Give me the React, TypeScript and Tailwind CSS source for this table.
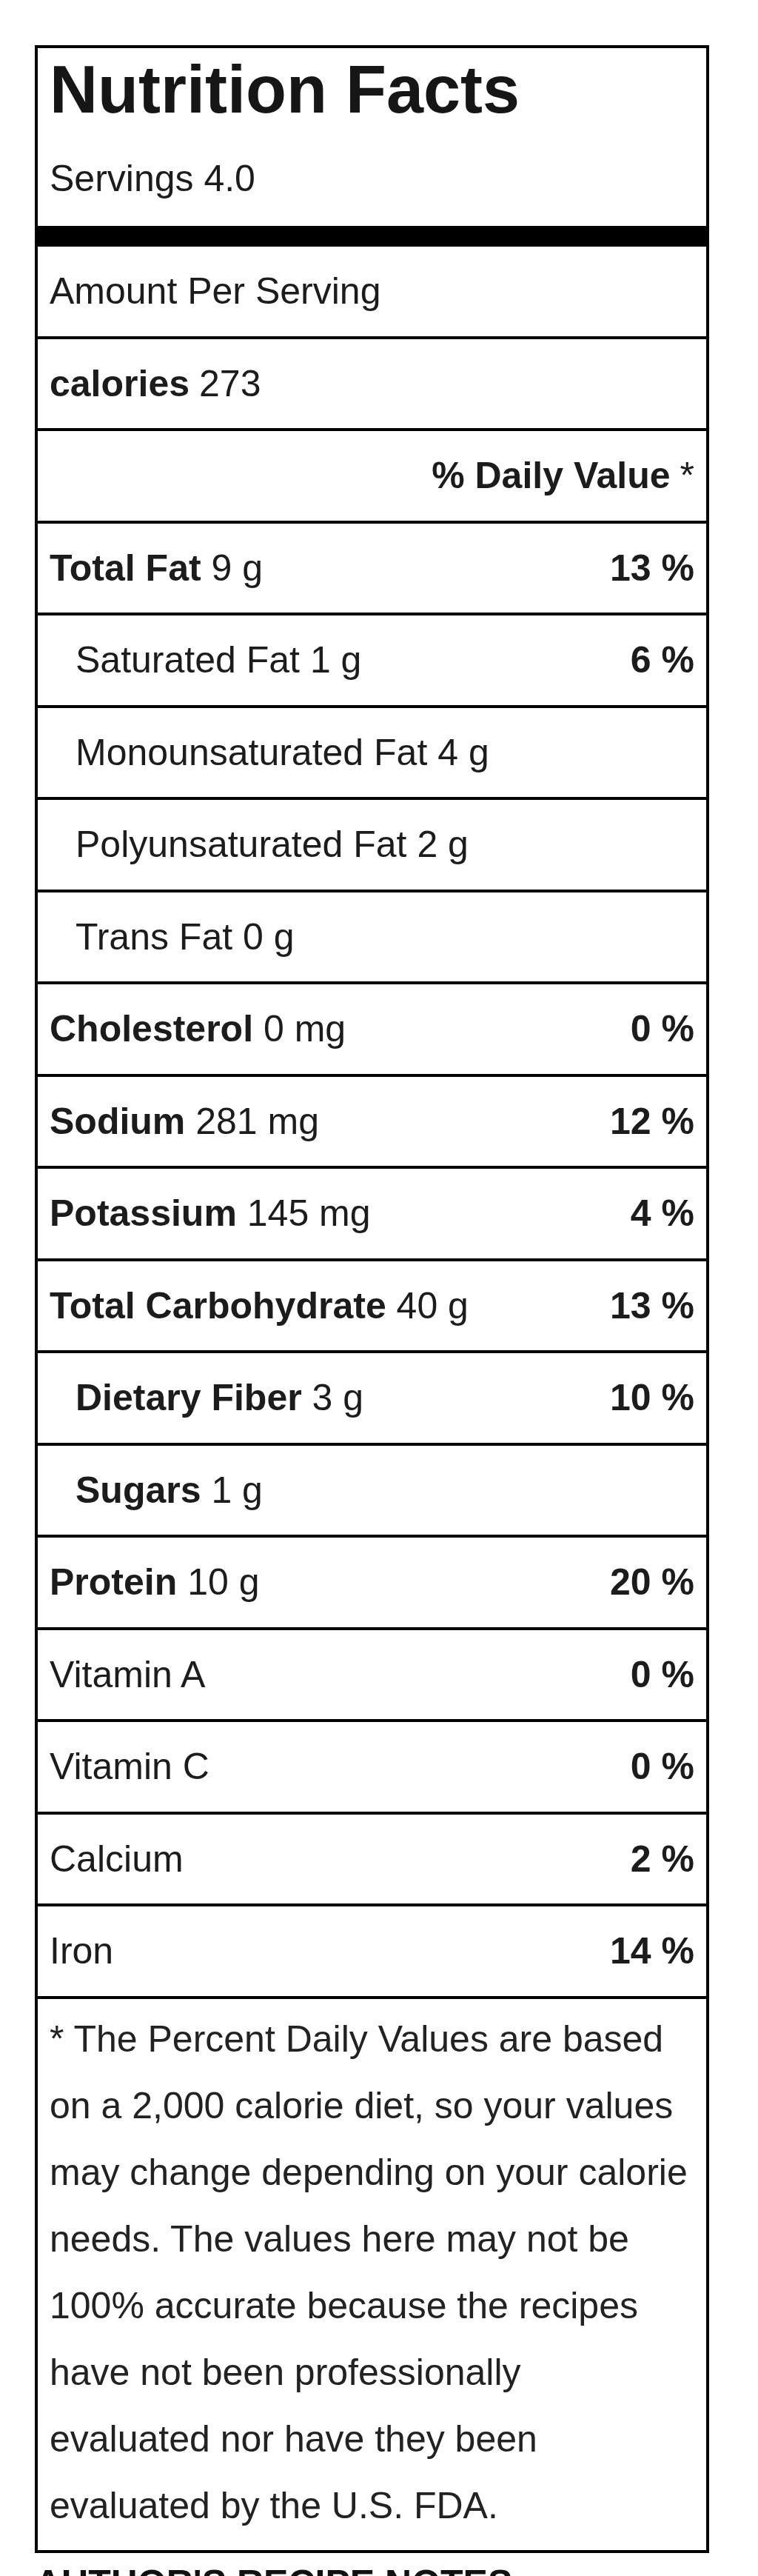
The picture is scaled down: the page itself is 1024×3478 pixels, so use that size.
import React from 'react';

interface Nutrient {
  label: string;
  amount?: string;
  percent?: string;
  bold?: boolean;
  indent?: boolean;
}

const nutrients: Nutrient[] = [
  { label: 'Total Fat', amount: '9 g', percent: '13 %', bold: true },
  { label: 'Saturated Fat', amount: '1 g', percent: '6 %', indent: true },
  { label: 'Monounsaturated Fat', amount: '4 g', indent: true },
  { label: 'Polyunsaturated Fat', amount: '2 g', indent: true },
  { label: 'Trans Fat', amount: '0 g', indent: true },
  { label: 'Cholesterol', amount: '0 mg', percent: '0 %', bold: true },
  { label: 'Sodium', amount: '281 mg', percent: '12 %', bold: true },
  { label: 'Potassium', amount: '145 mg', percent: '4 %', bold: true },
  { label: 'Total Carbohydrate', amount: '40 g', percent: '13 %', bold: true },
  { label: 'Dietary Fiber', amount: '3 g', percent: '10 %', bold: true, indent: true },
  { label: 'Sugars', amount: '1 g', bold: true, indent: true },
  { label: 'Protein', amount: '10 g', percent: '20 %', bold: true },
  { label: 'Vitamin A', percent: '0 %' },
  { label: 'Vitamin C', percent: '0 %' },
  { label: 'Calcium', percent: '2 %' },
  { label: 'Iron', percent: '14 %' },
];

const footnote = [
  '* The Percent Daily Values are based',
  'on a 2,000 calorie diet, so your values',
  'may change depending on your calorie',
  'needs. The values here may not be',
  '100% accurate because the recipes',
  'have not been professionally',
  'evaluated nor have they been',
  'evaluated by the U.S. FDA.',
];

const Row: React.FC<{ children: React.ReactNode; className?: string }> = ({ children, className = '' }) => (
  <div className={`flex h-[124.5px] items-center border-b-4 border-black px-4 text-[50px] leading-[58px] ${className}`}>
    {children}
  </div>
);

export default function App() {
  return (
    <div className="min-h-[3478px] overflow-hidden bg-white pt-[61px] font-['Liberation_Sans',Arial,sans-serif] text-[#1c1c1c]">
      <div className="ml-[47px] w-[911px] border-4 border-black">
        {/* header */}
        <div className="px-4 pt-[11px] pb-[34px]">
          <h1 className="text-[90px] font-bold leading-[90px] text-[#161616]">Nutrition Facts</h1>
          <p className="mt-[45px] text-[50px] leading-[60px]">Servings 4.0</p>
        </div>
        <div className="h-[28px] bg-black" />

        <Row>Amount Per Serving</Row>
        <Row>
          <span className="font-bold">calories</span>
          <span className="ml-[13px]">273</span>
        </Row>
        <Row className="justify-end">
          <span className="font-bold">% Daily Value</span>
          <span className="ml-[13px]">*</span>
        </Row>

        {nutrients.map((n) => (
          <Row key={n.label} className={`justify-between ${n.indent ? 'pl-[51px]' : ''}`}>
            <span className="whitespace-nowrap">
              <span className={n.bold ? 'font-bold' : ''}>{n.label}</span>
              {n.amount && <span> {n.amount}</span>}
            </span>
            {n.percent && <span className="font-bold">{n.percent}</span>}
          </Row>
        ))}

        {/* footnote */}
        <div className="px-4 pt-[9px] pb-[15px] text-[50px] leading-[90px] text-[#222]">
          {footnote.map((line) => (
            <div key={line} className="whitespace-nowrap">
              {line}
            </div>
          ))}
        </div>
      </div>

      <p className="ml-[47px] mt-[12px] whitespace-nowrap text-[50px] font-bold leading-[58px] text-[#111]">
        AUTHOR'S RECIPE NOTES
      </p>
    </div>
  );
}
